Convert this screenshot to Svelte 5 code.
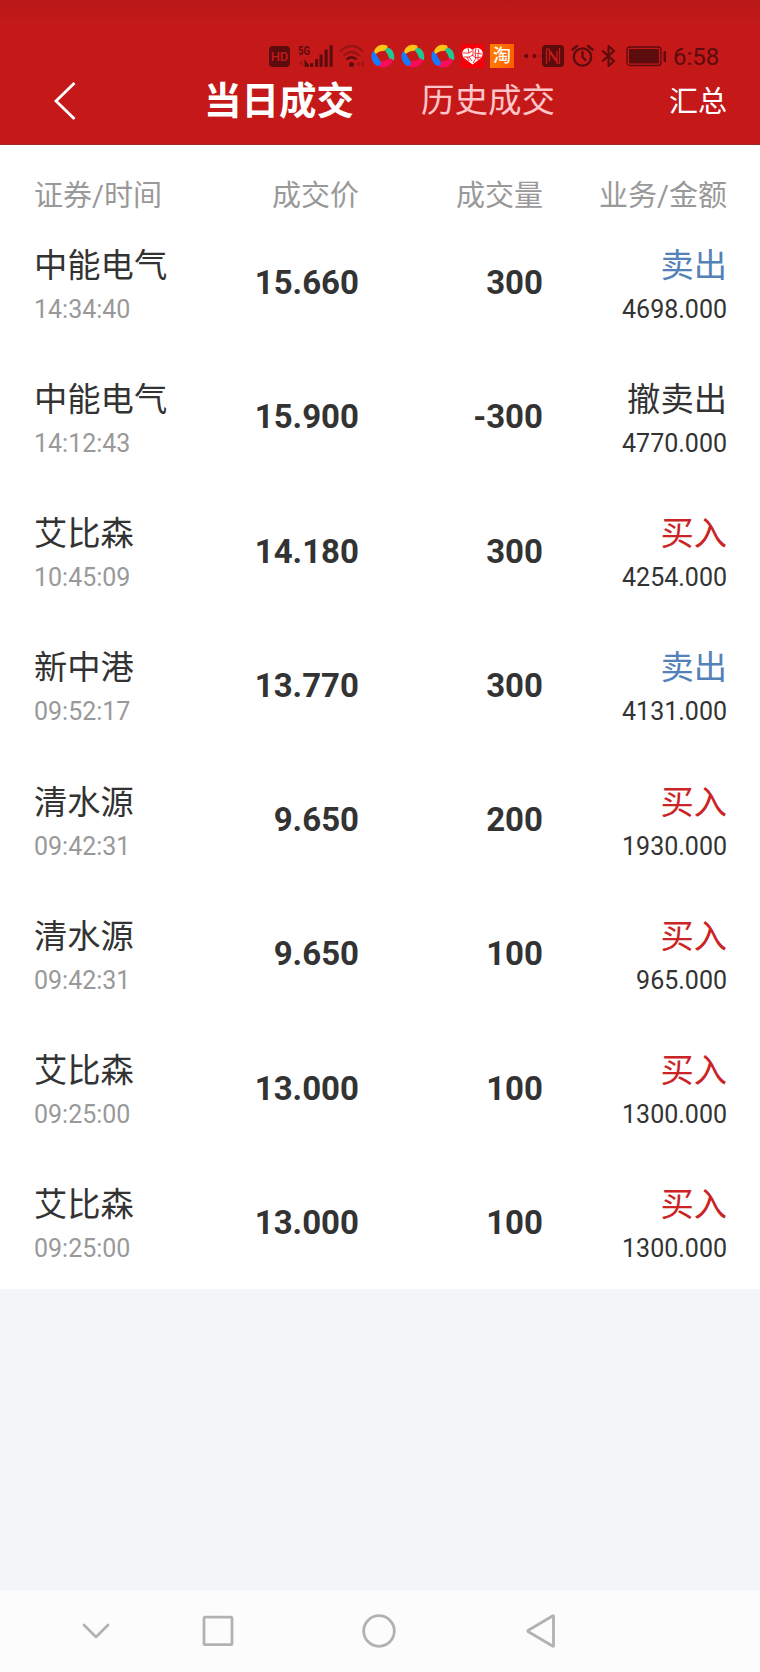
<script>
  const trades = [
    { name: '中能电气', time: '14:34:40', price: '15.660', volume: '300', type: '卖出', kind: 'sell', amount: '4698.000' },
    { name: '中能电气', time: '14:12:43', price: '15.900', volume: '-300', type: '撤卖出', kind: 'cancel', amount: '4770.000' },
    { name: '艾比森', time: '10:45:09', price: '14.180', volume: '300', type: '买入', kind: 'buy', amount: '4254.000' },
    { name: '新中港', time: '09:52:17', price: '13.770', volume: '300', type: '卖出', kind: 'sell', amount: '4131.000' },
    { name: '清水源', time: '09:42:31', price: '9.650', volume: '200', type: '买入', kind: 'buy', amount: '1930.000' },
    { name: '清水源', time: '09:42:31', price: '9.650', volume: '100', type: '买入', kind: 'buy', amount: '965.000' },
    { name: '艾比森', time: '09:25:00', price: '13.000', volume: '100', type: '买入', kind: 'buy', amount: '1300.000' },
    { name: '艾比森', time: '09:25:00', price: '13.000', volume: '100', type: '买入', kind: 'buy', amount: '1300.000' }
  ];

  let tab = 'today';
</script>

<div class="screen">
  <header>
    <div class="status">
      <span class="hd">HD</span>
      <svg class="signal" width="36" height="24" viewBox="0 0 36 24">
        <text x="0" y="10.500" font-size="13" font-weight="700" textLength="12" lengthAdjust="spacingAndGlyphs">5G</text>
        <path d="M4.500 16v6L1 19z" opacity=".4" />
        <path d="M6.500 15v8H11v-2.500L8.500 18z" />
        <rect x="12" y="19" width="3.200" height="4" rx="1" />
        <rect x="17" y="15" width="3.200" height="8" rx="1" />
        <rect x="21.500" y="10.500" width="3.200" height="12.500" rx="1" />
        <rect x="26.500" y="5.500" width="3.200" height="17.500" rx="1" />
        <rect x="31.500" y="1" width="3.200" height="22" rx="1" />
      </svg>
      <svg class="wifi" width="26" height="24" viewBox="0 0 26 24">
        <g fill="none" stroke="#5c0c0d" stroke-width="2.200">
          <path d="M1 7.500Q12.500-3.500 24 7.500" opacity=".4" />
          <path d="M4.500 12Q12.500 4 20.500 12" opacity=".4" />
          <path d="M7.500 15.500Q12.500 11 17.500 15.500" />
        </g>
        <circle cx="12.500" cy="20.500" r="2.500" />
        <path d="M20.500 17v6L17.500 20zM22.500 17v6l3-3z" opacity=".4" />
      </svg>
      {#each [1, 2, 3] as ball}
        <svg class="ball" width="24" height="24" viewBox="0 0 24 24">
          <path d="M3 8C4 2 10-.500 15.500 1.200 17 2 17 4 15.500 6L12 7C8 7 6 9 4.500 10.500 3 10.500 2.500 9.500 3 8z" fill="#ffc414" />
          <path d="M15 4.500C20 2 24 9 23.200 15 23 16.500 21 16.500 19.500 15.500 17.500 14 17.500 11 15.500 8.500 14 7 13.500 5.500 15 4.500z" fill="#1dcb91" />
          <path d="M21.500 17.500C19 22.500 13 24.500 8 22.700 6.500 22 7 20 8.500 18.500L12 17C16 17 17.500 15 19.500 14.500 21.500 14.500 22 16 21.500 17.500z" fill="#fa0b5c" />
          <path d="M1.500 8C-1 13 1.500 19.500 6.500 22 9 22 11 19 9 16.500 7 14.500 6.500 12 4.500 9.500 3.500 8 2.500 7 1.500 8z" fill="#147bff" />
        </svg>
      {/each}
      <svg class="heart" width="23" height="24" viewBox="0 0 23 24">
        <rect width="23" height="24" rx="1" fill="#f50008" />
        <path d="M11.500 20.500L3 14Q-.500 9 3 5.500 7.500 2 11.500 6 15.500 2 20 5.500 23.500 9 20 14z" fill="#fff" />
        <path d="M2 9h6l3-2M3 13h5l3 4M7 4l1 5M12 6v5l-4 2M15 4l-1 5 7 1M14 9l1 5 5-1M11 11l4 3-3 5M6 13l2 4M17 5l1 4M17 10v6" fill="none" stroke="#f50008" stroke-width=".8" />
      </svg>
      <span class="tao">淘</span>
      <svg class="dots" width="17" height="24" viewBox="0 0 17 24">
        <circle cx="2.200" cy="12" r="2" />
        <circle cx="10.500" cy="12" r="2" />
        <circle cx="16" cy="12" r=".7" />
      </svg>
      <svg class="nfc" width="22" height="24" viewBox="0 0 22 24">
        <rect y="1" width="22" height="22" rx="4" />
        <path d="M4.500 20V6Q4.500 4 6.500 5L15 16.500V7M17.500 4v14.500q0 2-2 .500L7.500 8v9.500" fill="none" stroke="#c51919" stroke-width="1.300" />
      </svg>
      <svg class="alarm" width="23" height="24" viewBox="0 0 23 24">
        <g fill="none" stroke="#5c0c0d" stroke-width="2.300" stroke-linecap="round">
          <circle cx="11.500" cy="13" r="8.700" />
          <path d="M11.500 8v5l3 3M1.500 5.500L6 2M21.500 5.500L17 2" />
        </g>
      </svg>
      <svg class="bluetooth" width="15" height="24" viewBox="0 0 15 24">
        <path d="M1 6.500L13 17 7.500 22V2L13 7 1 17.500" fill="none" stroke="#5c0c0d" stroke-width="2.100" stroke-linejoin="round" />
      </svg>
      <svg class="battery" width="41" height="24" viewBox="0 0 41 24">
        <rect x="1" y="3" width="34" height="18.500" rx="3" fill="none" stroke="#5c0c0d" stroke-width="1.300" />
        <rect x="3" y="5" width="30" height="14.500" rx="1" />
        <rect x="37.500" y="7" width="2.500" height="11" rx="1" />
      </svg>
      <span class="clock">6:58</span>
    </div>

    <nav>
      <button class="back" aria-label="返回">
        <svg width="22" height="38" viewBox="0 0 22 38">
          <path d="M20.500 1L2 19l18.500 18" fill="none" stroke="#fff" stroke-width="2.800" />
        </svg>
      </button>
      <div class="tabs">
        <button class:active={tab === 'today'} on:click={() => (tab = 'today')}>当日成交</button>
        <button class:active={tab === 'history'} on:click={() => (tab = 'history')}>历史成交</button>
      </div>
      <button class="summary">汇总</button>
    </nav>
  </header>

  <main>
    <div class="row head">
      <span>证券/时间</span>
      <span>成交价</span>
      <span>成交量</span>
      <span>业务/金额</span>
    </div>
    {#each trades as trade}
      <div class="row">
        <div class="cell">
          <span class="name">{trade.name}</span>
          <span class="time">{trade.time}</span>
        </div>
        <strong>{trade.price}</strong>
        <strong>{trade.volume}</strong>
        <div class="cell">
          <span class="name {trade.kind}">{trade.type}</span>
          <span class="amount">{trade.amount}</span>
        </div>
      </div>
    {/each}
  </main>

  <footer>
    <svg width="28" height="34" viewBox="0 0 28 34">
      <path d="M2 11l12 12 12-12" />
    </svg>
    <svg width="32" height="34" viewBox="0 0 32 34">
      <rect x="2" y="3.200" width="28" height="27.500" rx="1.500" />
    </svg>
    <svg width="34" height="34" viewBox="0 0 34 34">
      <circle cx="17" cy="17" r="15.300" />
    </svg>
    <svg width="30" height="34" viewBox="0 0 30 34">
      <path d="M27.500 2v30q-.500.500-1 0L2 17.500v-1L26.500 2q.500-.500 1 0z" />
    </svg>
  </footer>
</div>

<style>
  :global(body) {
    background: #f3f5f8;
  }

  .screen {
    display: flex;
    flex-direction: column;
    width: 760px;
    height: 1672px;
    overflow: hidden;
    font-family: Roboto, "Noto Sans CJK SC", sans-serif;
    color: #333;
  }

  svg {
    display: block;
    flex: none;
  }

  button {
    padding: 0;
    border: 0;
    background: none;
    color: #fff;
    font: inherit;
    cursor: pointer;
  }

  header {
    box-sizing: border-box;
    flex: none;
    height: 145px;
    padding-top: 44px;
    background: linear-gradient(#b91818, #c51919 28px);
    border-bottom: 1px solid #a52c2c;
  }

  .status {
    display: flex;
    align-items: center;
    height: 24px;
    padding-left: 269px;
    color: #5c0c0d;
    fill: #5c0c0d;
  }

  .hd {
    width: 21px;
    height: 21px;
    margin-top: 1px;
    border-radius: 4px;
    background: #5c0c0d;
    color: #c51919;
    font-size: 13px;
    font-weight: 500;
    line-height: 22px;
    text-align: center;
  }

  .signal {
    margin-left: 8px;
  }

  .wifi {
    margin-left: 5px;
  }

  .ball,
  .heart {
    margin-left: 6px;
  }

  .tao {
    width: 24px;
    height: 24px;
    margin-left: 6px;
    background: linear-gradient(100deg, #ff8000, #ff5a00);
    color: #fff;
    font-size: 18px;
    font-weight: 500;
    line-height: 23px;
    text-align: center;
  }

  .dots {
    margin-left: 10px;
  }

  .nfc {
    margin-left: 1px;
  }

  .alarm {
    margin-left: 7px;
  }

  .bluetooth {
    margin-left: 7px;
  }

  .battery {
    margin-left: 10px;
  }

  .clock {
    margin: 2px 0 0 6px;
    font-size: 24px;
    line-height: 24px;
  }

  nav {
    display: flex;
    align-items: center;
    height: 66px;
    padding: 0 33px 0 54px;
  }

  .tabs {
    display: flex;
    align-items: center;
    gap: 67px;
    margin-left: 128px;
  }

  .tabs button {
    color: #ffc5c8;
    font-size: 33.500px;
    line-height: 66px;
  }

  .tabs .active {
    color: #fff;
    font-size: 37.500px;
    font-weight: 700;
  }

  .summary {
    margin: -4px 0 0 auto;
    font-size: 29px;
  }

  main {
    flex: none;
    background: #fff;
  }

  .row {
    display: grid;
    grid-template-columns: 164px 161px 184px 1fr;
    align-items: center;
    height: 134.250px;
    padding: 0 33px 0 34px;
    text-align: right;
  }

  .row > :first-child {
    text-align: left;
  }

  .head {
    box-sizing: border-box;
    height: 70px;
    padding-top: 30px;
    color: #999;
    font-size: 29px;
    line-height: 42px;
  }

  .cell {
    display: flex;
    flex-direction: column;
    gap: 4px;
    padding-top: 7px;
  }

  .name {
    font-size: 33.300px;
    line-height: 44px;
  }

  .time,
  .amount {
    font-size: 25px;
    line-height: 36px;
  }

  .time {
    color: #999;
  }

  .sell {
    color: #5481b8;
  }

  .buy {
    color: #ca2426;
  }

  strong {
    padding-top: 1px;
    font-size: 33px;
    font-weight: 700;
  }

  footer {
    display: flex;
    align-items: center;
    box-sizing: border-box;
    height: 82px;
    margin-top: auto;
    padding-left: 82px;
    background: #fcfcfc;
    fill: none;
    stroke: #b2b2b2;
    stroke-width: 2.800;
    stroke-linecap: round;
    stroke-linejoin: round;
  }

  footer svg:nth-child(2) {
    margin-left: 92px;
  }

  footer svg:nth-child(3) {
    margin-left: 128px;
  }

  footer svg:nth-child(4) {
    margin-left: 130px;
  }
</style>
